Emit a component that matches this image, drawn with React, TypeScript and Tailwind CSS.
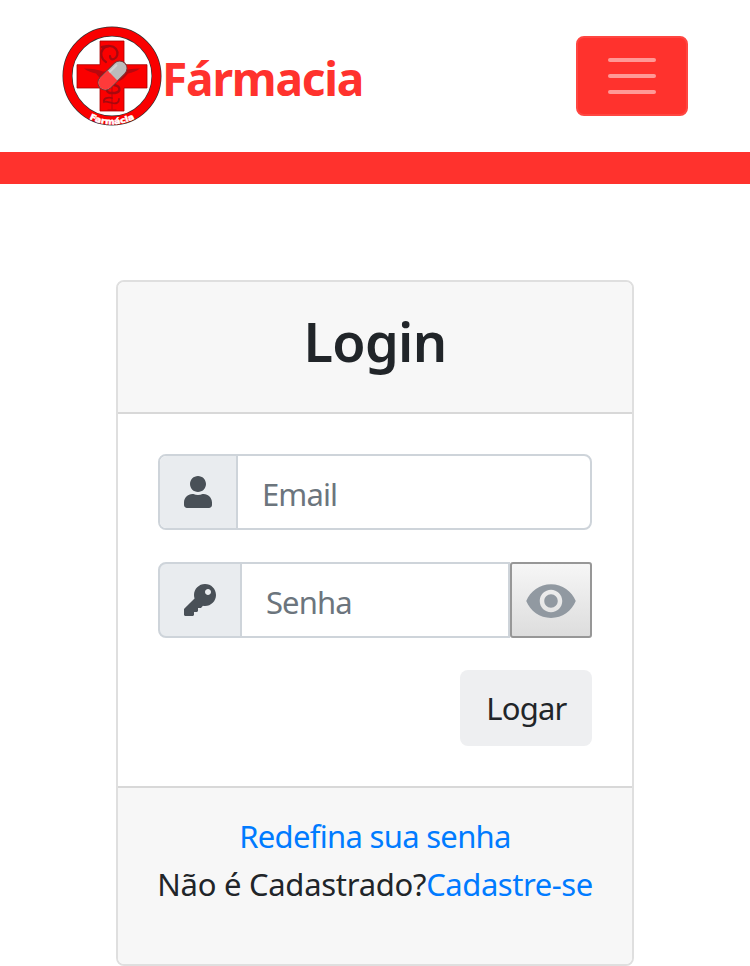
import React from "react";
import { FaUser, FaKey } from "react-icons/fa";
import { MdVisibility } from "react-icons/md";

function Logo() {
  return (
    <svg width="100" height="100" viewBox="0 0 100 100" className="block shrink-0">
      <circle cx="50" cy="50" r="44.5" fill="#fff" stroke="#333" strokeWidth="10" />
      <circle cx="50" cy="50" r="44.5" fill="none" stroke="#fa0000" strokeWidth="8.6" />
      <path
        d="M38 15h24v23.7h23v23.3H62v23H38V62H15V38.700h23z"
        fill="#fb0000"
        stroke="#a80000"
        strokeWidth="0.8"
      />
      <g fill="none" stroke="#a8080e" strokeLinecap="round">
        <path d="M44 36c-5-3-6-9-3-13c3-4 10-4 13 0c3 4 1 9-2 10c-3 1-4-1-4-3" strokeWidth="2.2" />
        <path d="M40 21l7-1" strokeWidth="2.500" />
        <path d="M52 59c7 1 7 7 1 8h-5c-4-1-4-5-1-6" strokeWidth="2.400" />
        <path d="M57 73c0 4-3 5-7 4c-4-1-6-2-8-1c-1-4 4-5 8-4" strokeWidth="1.800" />
        <path d="M50 60v23M46 84h8" strokeWidth="0.900" />
      </g>
      <path
        d="M22 42.500c8 0 14 1 19 3h18c5-2 11-3 19-3c-4 3-8 4-12 5c-3 4-6 7-11 8H45c-5-1-8-4-11-8c-4-1-8-2-12-5z"
        fill="#b8080e"
      />
      <g transform="translate(50.500 49.500) rotate(-45)">
        <rect x="-17.500" y="-7.400" width="35" height="14.800" rx="7.400" fill="#bcbcbc" stroke="#7c3434" strokeWidth="1" />
        <path d="M0-6.900h-10.100a6.900 6.900 0 0 0 0 13.800H0z" fill="#ff3a3a" />
        <path d="M1-4.500h9" stroke="#d2d2d2" strokeWidth="2" strokeLinecap="round" />
      </g>
      <path id="logo-arc" d="M16 84.300A48.300 48.300 0 0 0 84 84.300" fill="none" />
      <text
        fill="#fff"
        stroke="#fff"
        strokeWidth="0.5"
        fontSize="8"
        className="font-['DejaVu_Sans',sans-serif] font-bold"
      >
        <textPath href="#logo-arc" startOffset="50%" textAnchor="middle" textLength="47" lengthAdjust="spacingAndGlyphs">
          Farmácia
        </textPath>
      </text>
    </svg>
  );
}

export default function App() {
  return (
    <div className="h-[966px] overflow-hidden bg-white font-['Noto_Sans',sans-serif] text-[31px] leading-[48px] text-[#212529]">
      <header className="flex h-[152px] items-center justify-between px-[62px]">
        <a className="flex items-center text-[#ff322d]">
          <Logo />
          <span className="pt-[3px] text-[46px] leading-[60px] font-bold tracking-[-1.200px]">Fármacia</span>
        </a>
        <button
          aria-label="Menu"
          className="flex h-20 w-28 flex-col items-center justify-center gap-3 rounded-[8px] border-2 border-[#ff4641] bg-[#ff322d]"
        >
          <span className="h-1 w-12 rounded-full bg-[#ff9996]" />
          <span className="h-1 w-12 rounded-full bg-[#ff9996]" />
          <span className="h-1 w-12 rounded-full bg-[#ff9996]" />
        </button>
      </header>
      <div className="h-8 bg-[#ff322d]" />

      <main className="mx-auto mt-24 flex h-[686px] w-[518px] flex-col overflow-hidden rounded-[8px] border-2 border-[#dfdfdf] bg-white">
        <div className="h-[132px] border-b-2 border-[#d8d8d8] bg-[#f7f7f7] pt-[25px] text-center">
          <h1 className="text-[54px] leading-[68px] font-[560] tracking-[-0.700px]">Login</h1>
        </div>

        <form className="flex h-[372px] flex-col px-10 pt-10">
          <div className="flex h-[76px] overflow-hidden rounded-[8px] border-2 border-[#ced4da]">
            <span className="flex w-[78px] items-center border-r-2 border-[#ced4da] bg-[#e9ecef] pl-[21.500px] text-[#495057]">
              <FaUser className="size-8" />
            </span>
            <span className="pt-[3px] pl-6 leading-[70px] tracking-[-0.900px] text-[#6c757d]">Email</span>
          </div>

          <div className="mt-8 flex h-[76px]">
            <span className="flex w-[84px] items-center rounded-l-[8px] border-2 border-[#ced4da] bg-[#e9ecef] pl-[23.500px] text-[#495057]">
              <FaKey className="size-8" />
            </span>
            <span className="flex-1 border-y-2 border-r-2 border-[#ced4da] pt-[3px] pl-6 leading-[70px] tracking-[-0.900px] text-[#6c757d]">
              Senha
            </span>
            <button
              type="button"
              aria-label="Mostrar senha"
              className="flex w-[82px] items-center justify-center rounded-[3px] border-2 border-[#979797] bg-linear-to-b from-[#f6f6f6] to-[#dddddd] pt-[2px]"
            >
              <MdVisibility className="size-[54px] shrink-0 text-[#9199a1]" />
            </button>
          </div>

          <button
            type="button"
            className="mt-8 h-[76px] w-[132px] self-end rounded-[8px] bg-[#eeeff1] pl-px text-center tracking-[-0.800px]"
          >
            Logar
          </button>
        </form>

        <div className="flex-1 border-t-2 border-[#d8d8d8] bg-[#f7f7f7] pt-6 text-center whitespace-nowrap">
          <div>
            <a className="tracking-[-0.700px] text-[#007bff]">Redefina sua senha</a>
          </div>
          <div className="flex justify-center">
            <span className="tracking-[-0.280px]">Não é Cadastrado?</span>
            <a className="tracking-[-0.450px] text-[#007bff]">Cadastre-se</a>
          </div>
        </div>
      </main>
    </div>
  );
}
